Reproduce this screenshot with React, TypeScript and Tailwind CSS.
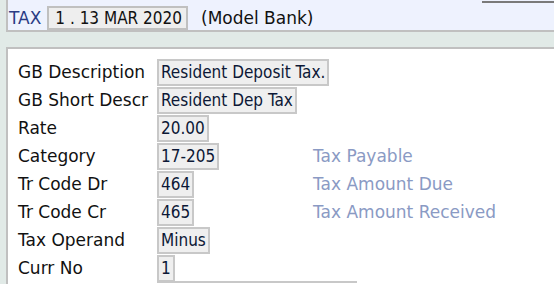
import React from "react";

const rows: { label: string; value: string; desc?: string }[] = [
  { label: "GB Description", value: "Resident Deposit Tax." },
  { label: "GB Short Descr", value: "Resident Dep Tax" },
  { label: "Rate", value: "20.00" },
  { label: "Category", value: "17-205", desc: "Tax Payable" },
  { label: "Tr Code Dr", value: "464", desc: "Tax Amount Due" },
  { label: "Tr Code Cr", value: "465", desc: "Tax Amount Received" },
  { label: "Tax Operand", value: "Minus" },
  { label: "Curr No", value: "1" },
];

const cond = "font-['DejaVu_Sans_Condensed','DejaVu_Sans',sans-serif] font-stretch-condensed";

export default function App() {
  return (
    <div className="w-[554px] h-[284px] overflow-hidden bg-[#e1eae7] text-[17px] leading-none relative font-['DejaVu_Sans',Verdana,sans-serif]">
      <div className="absolute right-0 top-[1px] w-[72px] h-[2px] bg-[#7a7a7a]" />
      <div className="ml-[6px] h-[32px] border-l-2 border-b-2 border-[#c0c0c0] bg-[#eef2fe] flex items-end pl-[1px]">
        <span className="text-[#2a3c85] mb-[3px] mr-[6px]">TAX</span>
        <span className={`h-[24px] border-2 border-[#c0c0c0] bg-[#eeeeee] text-[#111] pl-[6px] pr-[4px] flex items-center ${cond}`}>
          1 . 13 MAR 2020
        </span>
        <span className="ml-[13px] mb-[3px] text-[#111]">(Model Bank)</span>
      </div>
      <div className="ml-[6px] mt-[15px] border-l-2 border-t-2 border-[#c0c0c0] bg-white h-[240px] pt-[9px] pl-[10px]">
        {rows.map((r) => (
          <div key={r.label} className="flex items-center h-[28px]">
            <div className="w-[139px] text-[#111] whitespace-nowrap">{r.label}</div>
            <div className="w-[156px] shrink-0">
              <span className={`inline-flex items-center h-[27px] border-2 border-[#c8c8c8] bg-[#efefef] px-[2px] text-[#0c1836] whitespace-nowrap ${cond}`}>
                {r.value}
              </span>
            </div>
            {r.desc && <div className="text-[#8a9ac4] whitespace-nowrap">{r.desc}</div>}
          </div>
        ))}
        <div className="flex h-[28px] items-start mt-[-1px]">
          <div className="w-[139px]" />
          <div className="w-[200px] h-[27px] border-t-2 border-[#c8c8c8]" />
        </div>
      </div>
    </div>
  );
}
